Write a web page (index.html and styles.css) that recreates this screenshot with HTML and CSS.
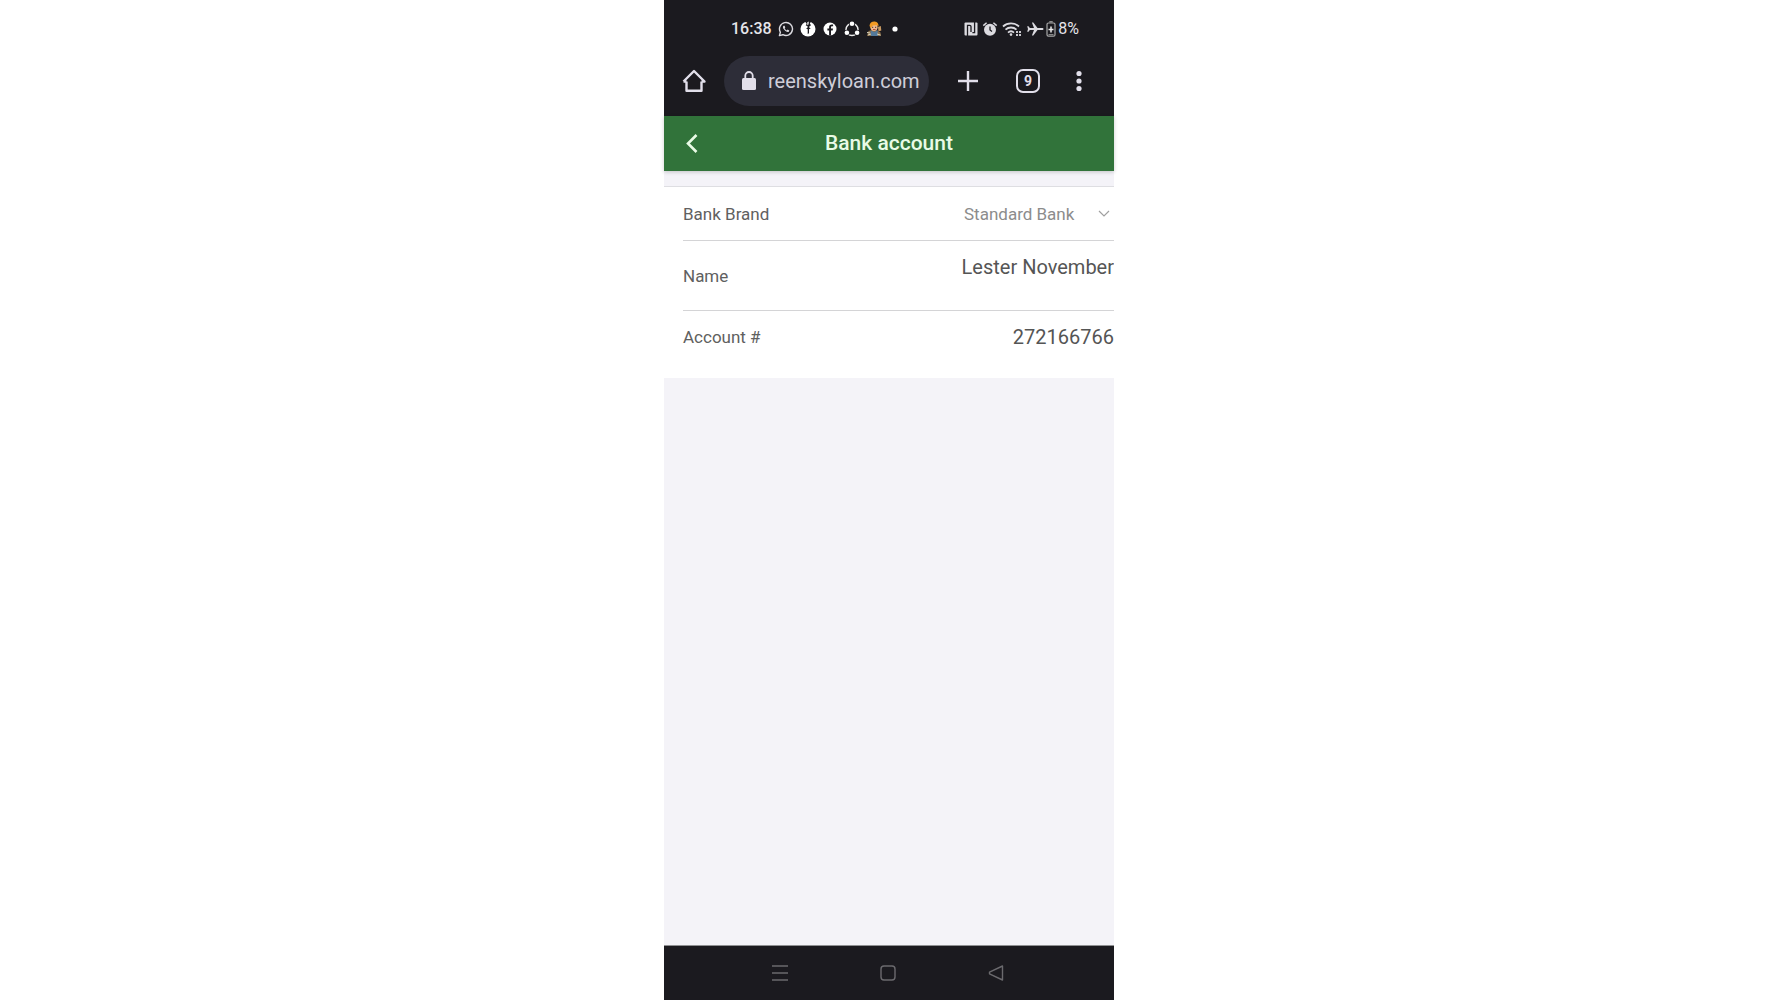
FILE: index.html
```html
<!DOCTYPE html>
<html lang="en">
<head>
    <meta charset="UTF-8">
    <meta name="viewport" content="width=device-width, initial-scale=1.0">
    <title>Bank account</title>
    <link rel="stylesheet" href="styles.css">
</head>
<body>
    <div class="phone">
        <div class="status-bar">
            <div class="status-left">
                <span class="clock">16:38</span>
                <!-- whatsapp -->
                <svg width="16" height="16" viewBox="0 0 16 16" fill="none" stroke="#dcdbe0">
                    <path d="M1.4 14.6l1-3.3A6.5 6.5 0 1 1 4.9 13.700z" stroke-width="1.400" stroke-linejoin="round"/>
                    <path d="M5.6 4.700c-1 .7-.9 2.200.5 3.900s3.300 2.900 4.700 2.100l.5-1.100-1.700-1-.9.8C7.700 9 7 8.200 6.600 7.300l.7-.9-.7-1.700z" fill="#dcdbe0" stroke="none"/>
                </svg>
                <!-- split circle -->
                <svg width="16" height="16" viewBox="0 0 16 16">
                    <circle cx="8" cy="8" r="7.500" fill="#fff"/>
                    <path d="M4.500 0h7L9.800 2.500 11 4.200 9.300 5.500v1.300l1.500.4-1.800 1v4L7.700 13V8.200L6 7.400l1.500-.7V5L5.700 4.400l1-1.700z" fill="#1b1a1f"/>
                    <path d="M7.300 1.300l1.500-.8-.3 3-1.200.7z" fill="#fff"/>
                </svg>
                <!-- facebook -->
                <svg width="16" height="16" viewBox="0 0 16 16">
                    <circle cx="8" cy="8" r="6.500" fill="#fff"/>
                    <path d="M7.100 14.600V9.500H5.400V7.500h1.700V6.200c0-1.900 1-2.800 2.700-2.800h1.300v1.800h-1c-.8 0-1.100.4-1.100 1.100v1.200h2l-.3 2H9v5.100z" fill="#1b1a1f"/>
                </svg>
                <!-- share ring -->
                <svg width="16" height="16" viewBox="0 0 16 16">
                    <circle cx="8" cy="8.500" r="6" fill="none" stroke="#eee" stroke-width="1.500"/>
                    <circle cx="8" cy="2.800" r="3" fill="#1b1a1f"/>
                    <circle cx="2.900" cy="11.700" r="3" fill="#1b1a1f"/>
                    <circle cx="13.100" cy="11.700" r="3" fill="#1b1a1f"/>
                    <circle cx="8" cy="2.800" r="2.300" fill="#fff"/>
                    <circle cx="2.900" cy="11.700" r="2.300" fill="#fff"/>
                    <circle cx="13.100" cy="11.700" r="2.300" fill="#fff"/>
                </svg>
                <!-- game character -->
                <svg width="16" height="16" viewBox="0 0 16 16">
                    <path d="M1 15l1.500-5L6 9l5 .5 3.500 2L15 15z" fill="#8b6f4a"/>
                    <path d="M4.500 9.500l4 1.500 3-2 .5 6H5z" fill="#547a9b"/>
                    <path d="M12 6l2.800-1 .5 4.500-2.800 1z" fill="#c99a62"/>
                    <circle cx="8" cy="6.300" r="3.600" fill="#f2b98b"/>
                    <path d="M3.500 5C3.700 1.800 6 .4 8.800.6c2.600.2 3.900 2 3.700 5l-1.700-1.300-4 .2L5 7z" fill="#f39a22"/>
                    <path d="M6 6.300h1.200M9 6.300h1.200" stroke="#45342c"/>
                    <path d="M1 11.500l3 .5M2 14l3-1M11 13l3.500 1" stroke="#d9d3bb"/>
                    <path d="M7 8.500h2.500" stroke="#b54b38"/>
                </svg>
                <svg width="16" height="16" viewBox="0 0 16 16">
                    <circle cx="7" cy="8" r="2.600" fill="#fff"/>
                </svg>
            </div>
            <div class="status-right">
                <!-- nfc -->
                <svg width="14" height="14" viewBox="0 0 14 14">
                    <rect x=".5" y=".5" width="13" height="13" rx="1" fill="#dcdbe0"/>
                    <path d="M3.500 14V3.300h2.200q1.300 0 1.300 1.300V10M10.600 0v10.700H8.400" fill="none" stroke="#1b1a1f" stroke-width="1.300"/>
                </svg>
                <!-- alarm -->
                <svg width="16" height="14" viewBox="0 0 16 14">
                    <circle cx="8" cy="7.700" r="6" fill="#dcdbe0"/>
                    <path d="M1.300 3.600L4.600.7M14.700 3.600L11.400.7" stroke="#dcdbe0" stroke-width="1.500"/>
                    <path d="M8 4.500V8l2 1.600" fill="none" stroke="#1b1a1f" stroke-width="1.300"/>
                </svg>
                <!-- wifi -->
                <svg width="20" height="16" viewBox="0 0 20 16" fill="none" stroke="#dcdbe0" stroke-width="1.800">
                    <path d="M1 5.500a12 12 0 0 1 16 0M3.500 8.600a8.300 8.300 0 0 1 11 0M6 11.600a4.600 4.600 0 0 1 6 0"/>
                    <circle cx="9" cy="13.600" r="1.300" fill="#dcdbe0" stroke="none"/>
                    <path d="M15 10v2M15 13v2M18 10v2M18 13v2"/>
                </svg>
                <div class="battery">
                    <!-- airplane -->
                    <svg width="18" height="14" viewBox="0 0 18 14" fill="#dcdbe0">
                        <path d="M17.500 7c0-.7-.6-1-1.500-1h-4.500L7.300.5H5.900L8 6H3.800L2.500 4.200H1.200L2 7l-.8 2.800h1.300L3.800 8H8l-2.100 5.500h1.400L11.500 8H16c.9 0 1.500-.3 1.500-1z"/>
                    </svg>
                    <svg width="10" height="16" viewBox="0 0 10 16">
                        <path d="M3.300.8h3.400" stroke="#aaa" stroke-width="1.200"/>
                        <rect x="1" y="2" width="8" height="13.200" rx="1.500" fill="none" stroke="#aaa" stroke-width="1.200"/>
                        <path d="M5 5.500v6M2.500 8.500h5" stroke="#eee" stroke-width="1.500"/>
                        <path d="M2.500 13.500h5" stroke="#888"/>
                    </svg>
                    <span class="battery-level">8%</span>
                </div>
            </div>
        </div>

        <div class="browser-bar">
            <button type="button" class="icon-button" aria-label="Home">
                <svg width="24" height="24" viewBox="0 0 24 24" fill="none" stroke="#e2dfea" stroke-width="2.400" stroke-linejoin="round">
                    <path d="M4.500 12.500v9.300h15v-9.300M1.500 12.500h3M19.500 12.500h3L12 2 1.500 12.500"/>
                </svg>
            </button>
            <div class="address">
                <svg width="14" height="20" viewBox="0 0 14 20">
                    <rect y="7" width="14" height="12" rx="1.500" fill="#e2dfea"/>
                    <path d="M3.300 8V4.700a3.700 3.700 0 0 1 7.400 0V8" fill="none" stroke="#e2dfea" stroke-width="1.800"/>
                </svg>
                <input type="text" class="url" value="reenskyloan.com" aria-label="Address">
            </div>
            <div class="browser-actions">
                <button type="button" class="icon-button" aria-label="New tab">
                    <svg width="24" height="24" viewBox="0 0 24 24" stroke="#e2dfea" stroke-width="2.400">
                        <path d="M12 2v20M2 12h20"/>
                    </svg>
                </button>
                <button type="button" class="icon-button tabs" aria-label="Open tabs">9</button>
                <button type="button" class="icon-button" aria-label="Menu">
                    <svg width="6" height="24" viewBox="0 0 6 24" fill="#e2dfea">
                        <circle cx="3" cy="4.500" r="2.600"/>
                        <circle cx="3" cy="12" r="2.600"/>
                        <circle cx="3" cy="19.500" r="2.600"/>
                    </svg>
                </button>
            </div>
        </div>

        <header class="page-header">
            <button type="button" class="icon-button" aria-label="Back">
                <svg width="12" height="20" viewBox="0 0 12 20" fill="none" stroke="#e9fbe6" stroke-width="2.600">
                    <path d="M10.500 2L2 10.500l8.500 8.500"/>
                </svg>
            </button>
            <h1>Bank account</h1>
        </header>

        <main>
            <form class="account-form">
                <div class="row">
                    <label for="bank-brand">Bank Brand</label>
                    <div class="select-wrap">
                        <select id="bank-brand">
                            <option>Standard Bank</option>
                        </select>
                        <svg class="chevron" width="12" height="8" viewBox="0 0 12 8" fill="none" stroke="#a0a0a0" stroke-width="1.200">
                            <path d="M1 1l5 5 5-5"/>
                        </svg>
                    </div>
                </div>
                <div class="row row-name">
                    <label for="name">Name</label>
                    <input type="text" id="name" value="Lester November">
                </div>
                <div class="row row-account">
                    <label for="account">Account #</label>
                    <input type="text" id="account" value="272166766">
                </div>
            </form>
        </main>

        <nav class="system-nav">
            <button type="button" class="icon-button" aria-label="Recent apps">
                <svg width="16" height="18" viewBox="0 0 16 18" stroke="#6b6a6e" stroke-width="1.400">
                    <path d="M0 2h16M0 9h16M0 16h16"/>
                </svg>
            </button>
            <button type="button" class="icon-button" aria-label="Home screen">
                <svg width="16" height="18" viewBox="0 0 16 18" fill="none" stroke="#6b6a6e" stroke-width="1.400">
                    <rect x="1" y="2" width="14" height="14" rx="3"/>
                </svg>
            </button>
            <button type="button" class="icon-button" aria-label="Back">
                <svg width="16" height="18" viewBox="0 0 16 18" fill="none" stroke="#6b6a6e" stroke-width="1.400" stroke-linejoin="round">
                    <path d="M14.500 2v14L1.500 9.800V8.200z"/>
                </svg>
            </button>
        </nav>
    </div>
</body>
</html>
```
FILE: styles.css
```css
* {
    box-sizing: border-box;
}

body {
    margin: 0;
    background-color: #fff;
    font-family: Roboto, Arial, sans-serif;
}

svg {
    display: block;
    flex-shrink: 0;
}

button, input, select {
    margin: 0;
    padding: 0;
    border: none;
    background: none;
    font-family: inherit;
    outline: none;
}

.icon-button {
    cursor: pointer;
    flex-shrink: 0;
}

.phone {
    display: flex;
    flex-direction: column;
    width: 100%;
    max-width: 450px;
    min-height: 100vh;
    margin: 0 auto;
    background-color: #f4f3f8;
}

/* status bar */
.status-bar {
    display: flex;
    align-items: center;
    justify-content: space-between;
    padding: 18px 35px 12px 67px;
    background-color: #1b1a1f;
    color: #e6e5ea;
    font-size: 16px;
    line-height: 22px;
}

.status-left, .status-right, .battery {
    display: flex;
    align-items: center;
}

.status-left {
    gap: 6px;
}

.status-right {
    gap: 4px;
}

.battery {
    gap: 2px;
}

.clock {
    font-weight: 500;
}

/* browser bar */
.browser-bar {
    display: flex;
    align-items: center;
    padding: 4px 32px 10px 18px;
    background-color: #1b1a1f;
}

.address {
    display: flex;
    flex: 1;
    align-items: center;
    gap: 12px;
    min-width: 0;
    height: 50px;
    margin: 0 27px 0 18px;
    padding: 0 8px 0 18px;
    border-radius: 25px;
    background-color: #2d2d38;
}

.url {
    flex: 1;
    min-width: 0;
    color: #cfced8;
    font-size: 20px;
    line-height: 24px;
}

.browser-actions {
    display: flex;
    align-items: center;
    gap: 36px;
}

.tabs {
    width: 24px;
    height: 24px;
    border: 2px solid #e2dfea;
    border-radius: 7px;
    color: #e2dfea;
    font-size: 14px;
    font-weight: 700;
    line-height: 20px;
}

/* page header */
.page-header {
    display: grid;
    grid-template-columns: 32px 1fr 32px;
    align-items: center;
    height: 55px;
    padding: 0 22px 2px;
    background-color: #31733a;
    box-shadow: 0 1px 4px rgba(0, 0, 0, 0.2);
}

.page-header .icon-button {
    justify-self: start;
}

h1 {
    margin: 0;
    color: #e9fbe6;
    font-size: 21px;
    font-weight: 500;
    line-height: 24px;
    text-align: center;
}

/* form */
main {
    flex: 1;
    padding-top: 15px;
}

.account-form {
    padding-left: 19px;
    border-top: 1px solid #dedee2;
    background-color: #fff;
}

.row {
    display: flex;
    align-items: center;
    justify-content: space-between;
    min-height: 54px;
    border-bottom: 1px solid #d4d4d6;
}

.row label {
    color: #606060;
    font-size: 17px;
    line-height: 24px;
}

.row input {
    flex: 1;
    min-width: 0;
    color: #555;
    font-size: 20px;
    line-height: 24px;
    text-align: right;
}

.row-name {
    min-height: 70px;
}

.row-name input {
    padding-bottom: 18px;
}

.row-account {
    min-height: 67px;
    padding-bottom: 16px;
    border-bottom: none;
}

.select-wrap {
    position: relative;
}

select {
    padding-right: 39px;
    appearance: none;
    color: #8c8c8c;
    font-size: 17px;
    line-height: 24px;
}

.chevron {
    position: absolute;
    top: 50%;
    right: 4px;
    transform: translateY(-50%);
    pointer-events: none;
}

/* system navigation */
.system-nav {
    display: flex;
    align-items: center;
    justify-content: center;
    gap: 92px;
    height: 55px;
    padding-right: 2px;
    border-top: 1px solid #8f9092;
    background-color: #1b1a1f;
}
```
